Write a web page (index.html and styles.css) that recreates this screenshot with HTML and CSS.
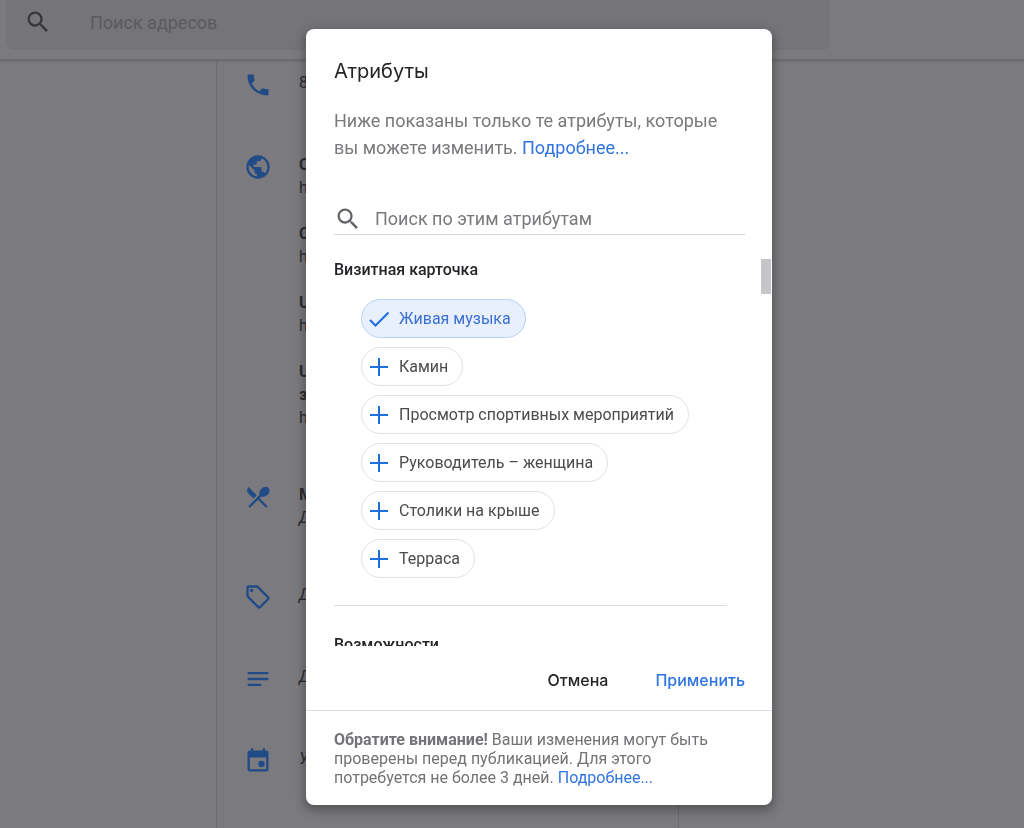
FILE: index.html
```
<!DOCTYPE html>
<html lang="ru">

<head>
  <meta charset="UTF-8">
  <meta name="viewport" content="width=device-width, initial-scale=1.0">
  <title>Атрибуты</title>

  <link rel="stylesheet" href="styles.css">
</head>

<body>
  <header class="topbar">
    <form class="topbar-search">
      <svg class="icon" viewBox="0 0 24 24" aria-hidden="true"><path d="M15.5 14h-.79l-.28-.27A6.47 6.47 0 0 0 16 9.5 6.5 6.5 0 1 0 9.5 16c1.61 0 3.09-.59 4.23-1.57l.27.28v.79l5 4.99L20.49 19l-4.99-5zm-6 0C7.01 14 5 11.99 5 9.5S7.01 5 9.5 5 14 7.01 14 9.5 11.99 14 9.5 14z"/></svg>
      <input type="text" placeholder="Поиск адресов" aria-label="Поиск адресов">
    </form>
  </header>

  <main class="profile">
    <section class="row">
      <svg class="icon" viewBox="0 0 24 24" aria-hidden="true"><path d="M6.54 5c.06.89.21 1.76.45 2.59L5.500 9.100C4.500 7.500 4 6 3.900 4zM3 4c0-.55.450-1 1-1h3.500c.55 0 1 .45 1 1 0 1.250.2 2.450.57 3.570.11.35.03.740-.25 1.020l-2.200 2.200c1.440 2.830 3.760 5.140 6.590 6.590l2.200-2.200c.280-.280.670-.360 1.020-.250 1.120.370 2.320.570 3.570.570.550 0 1 .450 1 1V20c0 .550-.450 1-1 1C10.610 21 3 13.390 3 4z"/></svg>
      <p>8</p>
    </section>
    <section class="row row-multi">
      <svg class="icon" viewBox="0 0 24 24" aria-hidden="true"><path d="M12 2C6.480 2 2 6.480 2 12s4.480 10 10 10 10-4.480 10-10S17.520 2 12 2zm-1 17.930c-3.950-.490-7-3.850-7-7.930 0-.620.080-1.210.210-1.790L9 15v1c0 1.100.900 2 2 2v1.930zm6.900-2.540c-.260-.810-1-1.390-1.900-1.390h-1v-3c0-.550-.450-1-1-1H8v-2h2c.550 0 1-.450 1-1V7h2c1.100 0 2-.900 2-2v-.410c2.930 1.190 5 4.060 5 7.410 0 2.080-.800 3.970-2.100 5.390z"/></svg>
      <div class="links">
        <p><b>С</b><br>h</p>
        <p><b>С</b><br>h</p>
        <p><b>U</b><br>h</p>
        <p><b>U<br>з</b><br>h</p>
      </div>
    </section>
    <section class="row row-multi">
      <svg class="icon" viewBox="0 0 24 24" aria-hidden="true"><path d="M8.100 13.340l2.830-2.830L3.910 3.500c-1.560 1.560-1.560 4.090 0 5.660l4.190 4.180zm6.780-1.810c1.530.710 3.680.210 5.270-1.380 1.910-1.910 2.280-4.650.810-6.120-1.460-1.460-4.200-1.100-6.120.810-1.590 1.590-2.090 3.740-1.380 5.270L3.700 19.870l1.410 1.410L12 14.410l6.880 6.880 1.410-1.410L13.410 13l1.470-1.470z"/></svg>
      <p><b>М</b><br><i>Д</i></p>
    </section>
    <section class="row">
      <svg class="icon" viewBox="0 0 24 24" aria-hidden="true"><path d="M21.410 11.580l-9-9C12.050 2.220 11.550 2 11 2H4c-1.100 0-2 .900-2 2v7c0 .550.220 1.050.590 1.420l9 9c.360.360.860.580 1.410.580s1.050-.220 1.410-.590l7-7c.370-.360.590-.860.590-1.410s-.230-1.060-.590-1.420zM13 20.010L4 11V4h7v-.010l9 9-7 7.020z"/><circle cx="6.500" cy="6.500" r="1.500"/></svg>
      <p><i>Д</i></p>
    </section>
    <section class="row">
      <svg class="icon" viewBox="0 0 24 24" aria-hidden="true"><path d="M4 6h16a1 1 0 0 1 0 2H4a1 1 0 0 1 0-2zm0 5h16a1 1 0 0 1 0 2H4a1 1 0 0 1 0-2zm0 5h10a1 1 0 0 1 0 2H4a1 1 0 0 1 0-2z"/></svg>
      <p><i>Д</i></p>
    </section>
    <section class="row">
      <svg class="icon" viewBox="0 0 24 24" aria-hidden="true"><path d="M19 3h-1V1h-2v2H8V1H6v2H5a2 2 0 0 0-2 2v14c0 1.100.890 2 2 2h14a2 2 0 0 0 2-2V5a2 2 0 0 0-2-2zm0 16H5V9h14v10z"/><circle cx="15" cy="14.500" r="2.700"/></svg>
      <p><i>У</i></p>
    </section>
  </main>

  <div class="overlay">
    <div class="dialog" role="dialog" aria-modal="true" aria-labelledby="dialog-title">
      <div class="dialog-head">
        <h1 id="dialog-title">Атрибуты</h1>
        <p>Ниже показаны только те атрибуты, которые вы можете изменить. <a href="#">Подробнее...</a></p>
        <div class="search">
          <svg class="icon" viewBox="0 0 24 24" aria-hidden="true"><path d="M15.5 14h-.79l-.28-.27A6.47 6.47 0 0 0 16 9.5 6.5 6.5 0 1 0 9.5 16c1.61 0 3.09-.59 4.23-1.57l.27.28v.79l5 4.99L20.49 19l-4.99-5zm-6 0C7.01 14 5 11.99 5 9.5S7.01 5 9.5 5 14 7.01 14 9.5 11.99 14 9.5 14z"/></svg>
          <input type="text" placeholder="Поиск по этим атрибутам" aria-label="Поиск по этим атрибутам">
        </div>
      </div>

      <div class="attributes">
        <div class="attributes-list">
          <section class="group">
            <h2>Визитная карточка</h2>
            <div class="chips">
              <button class="chip selected" aria-pressed="true"><svg viewBox="0 0 20 20" aria-hidden="true"><path d="M1 11l5.500 5.500L19.500 3.500"/></svg>Живая музыка</button>
              <button class="chip"><svg viewBox="0 0 20 20" aria-hidden="true"><path d="M10 1v18M1 10h18"/></svg>Камин</button>
              <button class="chip"><svg viewBox="0 0 20 20" aria-hidden="true"><path d="M10 1v18M1 10h18"/></svg>Просмотр спортивных мероприятий</button>
              <button class="chip"><svg viewBox="0 0 20 20" aria-hidden="true"><path d="M10 1v18M1 10h18"/></svg>Руководитель – женщина</button>
              <button class="chip"><svg viewBox="0 0 20 20" aria-hidden="true"><path d="M10 1v18M1 10h18"/></svg>Столики на крыше</button>
              <button class="chip"><svg viewBox="0 0 20 20" aria-hidden="true"><path d="M10 1v18M1 10h18"/></svg>Терраса</button>
            </div>
          </section>
          <section class="group">
            <h2>Возможности</h2>
          </section>
        </div>
        <div class="scroll-track"><div class="scroll-thumb"></div></div>
      </div>

      <div class="actions">
        <button>Отмена</button>
        <button class="primary">Применить</button>
      </div>

      <footer class="note">
        <b>Обратите внимание!</b> Ваши изменения могут быть проверены перед публикацией. Для этого потребуется не более 3 дней. <a href="#">Подробнее...</a>
      </footer>
    </div>
  </div>
</body>

</html>
```
FILE: styles.css
```
* {
  box-sizing: border-box;
}

body {
  background: #7b7a7e;
  color: #29292d;
  display: flex;
  flex-direction: column;
  font-family: Roboto, "Liberation Sans", sans-serif;
  font-size: 16px;
  height: 100vh;
  margin: 0;
  overflow: hidden;
}

h1,
h2,
p {
  margin: 0;
}

b {
  font-weight: 700;
}

a {
  color: #2f74e0;
  text-decoration: none;
}

button {
  cursor: pointer;
  font-family: inherit;
}

input {
  background: none;
  border: 0;
  flex: 1;
  font-family: inherit;
  font-size: 18px;
  min-width: 0;
  outline: none;
  padding: 0;
}

.icon {
  fill: currentColor;
  flex: none;
  height: 28px;
  width: 28px;
}

/* page behind the dialog */
.topbar {
  border-bottom: 2px solid #6c6b6f;
  box-shadow: 0 1px 2px #717074;
  flex: none;
  height: 61px;
  padding: 0 194px 9px 6px;
}

.topbar-search {
  align-items: center;
  background: #757478;
  border-radius: 0 0 8px 8px;
  color: #37363a;
  display: flex;
  gap: 38px;
  height: 100%;
  padding: 0 18px 6px;
}

.topbar-search input::placeholder {
  color: #5b5a5e;
}

.profile {
  border-left: 1px solid #6d6c70;
  border-right: 1px solid #6d6c70;
  flex: 1;
  line-height: 23px;
  margin-left: 216px;
  max-width: 463px;
  min-height: 0;
}

.row {
  display: flex;
  gap: 27px;
  padding: 10px 0 44px 27px;
}

.row .icon {
  color: #204b87;
}

.links {
  display: grid;
  gap: 23px;
}

/* dialog */
.overlay {
  display: flex;
  inset: 0;
  justify-content: center;
  padding: 29px 0 23px 54px;
  position: fixed;
}

.dialog {
  background: #fff;
  border-radius: 8px;
  box-shadow: 0 4px 10px 2px rgba(32, 32, 36, 0.4);
  display: flex;
  flex-direction: column;
  max-width: 466px;
  overflow: hidden;
  width: 100%;
}

.dialog-head {
  color: #78797c;
  font-size: 18px;
  line-height: 27px;
  padding: 28px 27px 0 28px;
}

.dialog-head h1 {
  color: #242528;
  font-family: Inter, "Noto Sans", sans-serif;
  font-size: 20px;
  font-weight: 400;
  line-height: 28px;
  margin-bottom: 22px;
}

.search {
  align-items: center;
  border-bottom: 1px solid #d5d6da;
  color: #646568;
  display: flex;
  gap: 13px;
  height: 32px;
  margin-top: 42px;
}

.search input::placeholder {
  color: #78797c;
}

.attributes {
  display: flex;
  flex: 1;
  min-height: 0;
}

.attributes-list {
  flex: 1;
  overflow: hidden;
  padding-left: 28px;
}

.group {
  border-bottom: 1px solid #dadce0;
  margin-right: 34px;
  padding: 23px 0 27px;
}

.group + .group {
  padding-top: 27px;
}

.group h2 {
  color: #242528;
  font-size: 16px;
  font-weight: 500;
  line-height: 24px;
}

.chips {
  align-items: flex-start;
  display: flex;
  flex-direction: column;
  gap: 9px;
  margin: 17px 0 0 27px;
}

.chip {
  align-items: center;
  background: #fff;
  border: 1px solid #e2e1e7;
  border-radius: 20px;
  color: #4a4b4e;
  display: flex;
  font-size: 16px;
  gap: 10px;
  height: 39px;
  padding: 0 14px 0 7px;
}

.chip svg {
  fill: none;
  height: 20px;
  stroke: #1f6fe0;
  stroke-width: 2;
  width: 20px;
}

.chip.selected {
  background: #e8f0fe;
  border-color: #b9d2f8;
  color: #3b70d0;
}

.scroll-track {
  flex: none;
  padding-top: 24px;
  width: 11px;
}

.scroll-thumb {
  background: #c6c5c8;
  height: 35px;
  width: 10px;
}

.actions {
  align-items: center;
  display: flex;
  flex: none;
  gap: 47px;
  height: 64px;
  justify-content: flex-end;
  padding: 4px 27px 0;
}

.actions button {
  background: none;
  border: 0;
  color: #242528;
  font-family: Inter, "Noto Sans", sans-serif;
  font-size: 16px;
  font-weight: 500;
  padding: 0;
}

.actions .primary {
  color: #2f74e0;
}

.note {
  border-top: 1px solid #dadce0;
  color: #727376;
  line-height: 19px;
  padding: 19px 28px 18px;
}
```
